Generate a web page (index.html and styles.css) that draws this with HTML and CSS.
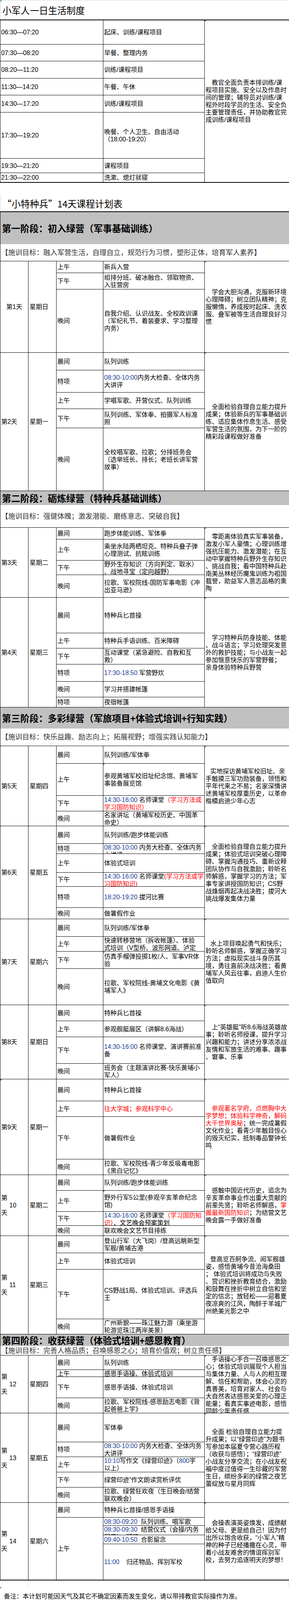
FILE: index.html
```html
<!DOCTYPE html>
<html lang="zh-CN">
<head>
<meta charset="utf-8">
<title>小军人一日生活制度</title>
<link rel="stylesheet" href="styles.css">
</head>
<body>
<div class="sheet">
  <div class="title1 tri">小军人一日生活制度</div>

  <div class="routine">
    <div class="c"><p>06:30—07:20</p></div><div class="c"><p>起床、训练/课程项目</p></div>
    <div class="c"><p>07:30—08:20</p></div><div class="c"><p>早餐、整理内务</p></div>
    <div class="c"><p>08:20—11:20</p></div><div class="c"><p>训练/课程项目</p></div>
    <div class="c"><p>11:30—14:20</p></div><div class="c"><p>午餐、午休</p></div>
    <div class="c"><p>14:30—17:20</p></div><div class="c"><p>训练/课程项目</p></div>
    <div class="c"><p>17:30—19:20</p></div><div class="c"><p>晚餐、个人卫生、自由活动<br>（18:00-19:20）</p></div>
    <div class="c"><p>19:30—21:20</p></div><div class="c"><p>课程项目</p></div>
    <div class="c"><p>21:30—22:00</p></div><div class="c"><p>洗漱、熄灯就寝</p></div>
    <div class="c rnote tri"><p>教官全面负责本排训练/课<br>程项目实施、安全以及作息时<br>间的管理；辅导员对训练/课<br>程外时段学员的生活、安全负<br>主要管理责任，并协助教官完<br>成训练/课程项目</p></div>
  </div>

  <div class="title2">“小特种兵”14天课程计划表</div>

  <div class="course">
    <div class="phase p1">第一阶段：初入绿营（军事基础训练）</div>
    <div class="goal g1">【施训目标：融入军营生活，自理自立，规范行为习惯，塑形正体，培育军人素养】</div>

    <div class="day d1">
      <div class="c dc mid"><p>第1天</p></div>
      <div class="c wk"><p>星期日</p></div>
      <div class="c pd"><p>上午</p></div><div class="c ac"><p>新兵入营</p></div>
      <div class="c pd"><p>下午</p></div><div class="c ac"><p>组排分班、破冰融合、领取物资、<br>入驻营房</p></div>
      <div class="c pd"><p>晚间</p></div><div class="c ac"><p>自我介绍、认识战友、全校政训课<br>（军纪礼节、着装要求、学习整理<br>内务）</p></div>
      <div class="c nt tri"><p>学会大胆沟通，克服新环境<br>心理障碍；树立团队精神；克<br>服懒惰，养成按时起床、洗衣<br>服、叠军被等生活自理良好习<br>惯</p></div>
    </div>

    <div class="day d2">
      <div class="c dc"><p>第2天</p></div>
      <div class="c wk"><p>星期一</p></div>
      <div class="c pd"><p>晨间</p></div><div class="c ac"><p>队列训练</p></div>
      <div class="c pd"><p>特项</p></div><div class="c ac"><p><span class="blu">08:30-10:00</span>内务大检查、全体内务<br>大讲评</p></div>
      <div class="c pd"><p>上午</p></div><div class="c ac"><p>学唱军歌、开营仪式、队列训练</p></div>
      <div class="c pd"><p>下午</p></div><div class="c ac"><p>队列训练、军体拳、拍摄军人标准<br>照</p></div>
      <div class="c pd"><p>晚间</p></div><div class="c ac"><p>全校唱军歌、拉歌；分排班务会<br>（选举班长、排长；老班长讲军营<br>故事）</p></div>
      <div class="c nt tri"><p>全面检验自理自立能力提升<br>成果；体验新兵的军事基础训<br>练、适应集体作息生活、感受<br>军营生活的氛围，为下一阶的<br>精彩段课程做好准备</p></div>
    </div>

    <div class="phase p2">第二阶段：砺炼绿营（特种兵基础训练）</div>
    <div class="goal g2">【施训目标：强健体魄；激发潜能、磨练意志、突破自我】</div>

    <div class="day d3">
      <div class="c dc"><p>第3天</p></div>
      <div class="c wk"><p>星期二</p></div>
      <div class="c pd"><p>晨间</p></div><div class="c ac"><p>跑步体能训练、军体拳</p></div>
      <div class="c pd"><p>上午</p></div><div class="c ac"><p>乘坐水陆两栖坦克、特种兵叠子弹<br>心理测试、抗眩训练</p></div>
      <div class="c pd"><p>下午</p></div><div class="c ac"><p>野外生存知识（方向判定、取水）<br>、战地寻宝（定向越野）</p></div>
      <div class="c pd"><p>晚间</p></div><div class="c ac"><p>拉歌、军校院线-国防军事电影《冲<br>出亚马逊》</p></div>
      <div class="c nt tri"><p>零距离体验真实军事装备，<br>激发小军人豪情；心理训练增<br>强抗压能力、激发潜能；在互<br>动中掌握特种兵野外生存知识<br>、挑战自我；看中国特种兵赴<br>南美丛林经历魔鬼训练为祖国<br>载誉，助益军人意志品格的熏<br>陶</p></div>
    </div>

    <div class="day d4">
      <div class="c dc"><p>第4天</p></div>
      <div class="c wk"><p>星期三</p></div>
      <div class="c pd"><p>晨间</p></div><div class="c ac"><p>特种兵匕首操</p></div>
      <div class="c pd"><p>上午</p></div><div class="c ac"><p>特种兵手语训练、百米障碍</p></div>
      <div class="c pd"><p>下午</p></div><div class="c ac"><p>互动课堂（紧急避险、自救和互<br>救）</p></div>
      <div class="c pd"><p>特项</p></div><div class="c ac"><p><span class="blu">17:30-18:50</span> 军营野炊</p></div>
      <div class="c pd"><p>晚间</p></div><div class="c ac"><p>学习并搭建帐篷</p></div>
      <div class="c pd"><p>特项</p></div><div class="c ac"><p>夜宿帐篷</p></div>
      <div class="c nt tri"><p>学习特种兵防身技能、体能<br>、战斗语言；学习处理突发意<br>外的救护技能；与小战友一起<br>参加惬意快乐的军营野餐；<br>亲身体验特种兵野营</p></div>
    </div>

    <div class="phase p3">第三阶段：多彩绿营（军旅项目+体验式培训+行知实践）</div>
    <div class="goal g3">【施训目标：快乐益趣、励志向上；拓展视野；增强实践认知能力】</div>

    <div class="day d5">
      <div class="c dc"><p>第5天</p></div>
      <div class="c wk"><p>星期四</p></div>
      <div class="c pd"><p>晨间</p></div><div class="c ac"><p>队列训练/军体拳</p></div>
      <div class="c pd"><p>上午</p></div><div class="c ac tri"><p>参观黄埔军校旧址纪念馆、黄埔军<br>事装备展览馆</p></div>
      <div class="c pd"><p>下午</p></div><div class="c ac"><p><span class="blu">14:30-16:00</span> 名师课堂<span class="red">（学习方法或<br>学习国防知识）</span></p></div>
      <div class="c pd"><p>晚间</p></div><div class="c ac"><p>名家讲坛（黄埔军校历史、中国革<br>命史）</p></div>
      <div class="c nt ind-s tri"><p>实地探访黄埔军校旧址、亲<br>手触摸三军功勋装备，领悟和<br>平年代来之不易；名家深情讲<br>述黄埔军校厚重历史，以革命<br>楷模启迪少年心志</p></div>
    </div>

    <div class="day d6">
      <div class="c dc"><p>第6天</p></div>
      <div class="c wk"><p>星期五</p></div>
      <div class="c pd"><p>晨间</p></div><div class="c ac"><p>队列训练/跑步体能训练</p></div>
      <div class="c pd"><p>特项</p></div><div class="c ac"><p><span class="blu">08:30-10:00</span> 内务大检查、全体内务<br>大讲评</p></div>
      <div class="c pd"><p>上午</p></div><div class="c ac"><p>体验式培训</p></div>
      <div class="c pd"><p>下午</p></div><div class="c ac"><p><span class="blu">14:30-16:00</span> 名师课堂<span class="red">(学习方法或学<br>习国防知识)</span></p></div>
      <div class="c pd"><p>特项</p></div><div class="c ac"><p><span class="blu">18:20-19:20</span> 拔河比赛</p></div>
      <div class="c pd"><p>晚间</p></div><div class="c ac"><p>做暑假作业</p></div>
      <div class="c nt tri"><p>全面检验自理自立能力提升<br>成果；体验式培训突破心理障<br>碍、掌握沟通技巧、重新诠释<br>团队协作与自我激励；聆听名<br>师解惑，掌握学习的方法；军<br>事专家讲授国防知识；CS野<br>战烽烟再起决战决胜；拔河大<br>挑战爆发集体力量</p></div>
    </div>

    <div class="day d7">
      <div class="c dc"><p>第7天</p></div>
      <div class="c wk"><p>星期六</p></div>
      <div class="c pd"><p>晨间</p></div><div class="c ac"><p>队列训练/军体拳</p></div>
      <div class="c pd"><p>上午</p></div><div class="c ac"><p>快速转移营地（拆收帐篷）、体验<br>式培训（V型桥、波形网道、泸定<br>桥）</p></div>
      <div class="c pd"><p>下午</p></div><div class="c ac tri"><p>仿真手榴弹投掷1枚/人、军事VR体<br>验</p></div>
      <div class="c pd"><p>晚间</p></div><div class="c ac"><p>拉歌、军校院线-黄埔文化电影《黄<br>埔军人》</p></div>
      <div class="c nt ind-s tri"><p>水上项目唤起勇气和快乐；<br>聆听名师解惑，掌握正确学习<br>方法；虚拟现实战斗身历其<br>境，勇往直前决战决胜；看黄<br>埔军人风云往事，启迪人生价<br>值取向</p></div>
    </div>

    <div class="day d8">
      <div class="c dc"><p>第8天</p></div>
      <div class="c wk"><p>星期日</p></div>
      <div class="c pd"><p>晨间</p></div><div class="c ac"><p>特种兵匕首操</p></div>
      <div class="c pd"><p>上午</p></div><div class="c ac"><p>参观舰艇展区（讲解8.6海战）</p></div>
      <div class="c pd"><p>下午</p></div><div class="c ac"><p><span class="blu">14:30-16:00</span> 名师课堂、演讲赛前准<br>备</p></div>
      <div class="c pd"><p>晚间</p></div><div class="c ac"><p>班务会（主题演讲比赛-快乐黄埔小<br>军人）</p></div>
      <div class="c nt tri"><p>上“英雄艇”听8.6海战英雄故<br>事；聆听名师授课，提升学习<br>兴趣和能力；讲述分享浓浓战<br>友情和军旅生活的难事、趣事<br>、窘事、乐事</p></div>
    </div>

    <div class="day d9">
      <div class="c dc tri"><p>第9天</p></div>
      <div class="c wk"><p>星期一</p></div>
      <div class="c pd"><p>晨间</p></div><div class="c ac"><p>特种兵匕首操</p></div>
      <div class="c pd"><p>上午</p></div><div class="c ac"><p class="red">往大学城；参观科学中心</p></div>
      <div class="c pd"><p>下午</p></div><div class="c ac"><p>做暑假作业</p></div>
      <div class="c pd"><p>晚间</p></div><div class="c ac"><p>拉歌、军校院线-青少年反吸毒电影<br>《黑白记忆》</p></div>
      <div class="c nt tri"><p><span class="red">参观著名学府，点燃胸中大<br>学梦想；体验科学神奇，解码<br>大千世界奥秘</span>；统一完成暑假<br>文化作业；看青少年触目惊心<br>的毁灭纪实，抵制毒品警钟长<br>鸣</p></div>
    </div>

    <div class="day d10">
      <div class="c dc"><p>第<br><span class="dn">10</span><br>天</p></div>
      <div class="c wk"><p>星期二</p></div>
      <div class="c pd"><p>晨间</p></div><div class="c ac"><p>队列训练/跑步体能训练</p></div>
      <div class="c pd"><p>上午</p></div><div class="c ac tri"><p>野外行军5公里(参观辛亥革命纪念<br>馆)</p></div>
      <div class="c pd"><p>下午</p></div><div class="c ac"><p><span class="blu">14:30-16:00</span> 名师课堂<span class="red">（学习国防知<br>识）</span>、文艺晚会预案策划</p></div>
      <div class="c pd"><p>晚间</p></div><div class="c ac"><p>联欢晚会文艺节目排练</p></div>
      <div class="c nt tri"><p>感触中国近代历史，追念为<br>辛亥革命事业作出重大贡献的<br>前辈先贤；聆听名师解惑，<span class="red">掌<br>握最新国防知识</span>；为结营文艺<br>晚会露一手做好准备</p></div>
    </div>

    <div class="day d11">
      <div class="c dc"><p>第<br><span class="dn">11</span><br>天</p></div>
      <div class="c wk"><p>星期三</p></div>
      <div class="c pd"><p>晨间</p></div><div class="c ac"><p>登山行军（大飞岗）/登高远眺新型<br>军舰/黄埔古港</p></div>
      <div class="c pd"><p>上午</p></div><div class="c ac"><p>体验式培训</p></div>
      <div class="c pd"><p>下午</p></div><div class="c ac"><p>CS野战1局、体验式培训、评选兵<br>王</p></div>
      <div class="c pd"><p>晚间</p></div><div class="c ac"><p>广州新貌——珠江魅力游（乘坐游<br>轮游览珠江两岸美景）</p></div>
      <div class="c nt ind-s tri"><p>登高览百舸争流、阅军舰雄<br>姿，感悟黄埔今昔沧海桑田<br>；&nbsp;体验式培训将成功与失败<br>、赏识和挫折教育结合，激励<br>和鼓舞在挫折中树立自信和坚<br>定的信念；放轻松——迎着夏<br>夜凉爽的江风，陶醉于羊城广<br>州绝美光影之中</p></div>
    </div>

    <div class="phase p4">第四阶段：收获绿营（体验式培训+感恩教育）</div>
    <div class="goal g4">【施训目标：完善人格品质；召唤感恩之心；培育价值观；树立责任感】</div>

    <div class="day d12">
      <div class="c dc"><p>第<br><span class="dn">12</span><br>天</p></div>
      <div class="c wk"><p>星期四</p></div>
      <div class="c pd"><p>晨间</p></div><div class="c ac"><p>队列训练</p></div>
      <div class="c pd"><p>上午</p></div><div class="c ac"><p>感恩手语操、体验式培训</p></div>
      <div class="c pd"><p>下午</p></div><div class="c ac"><p>感恩手语操、体验式培训</p></div>
      <div class="c pd"><p>晚间</p></div><div class="c ac"><p>拉歌、军校院线-感恩励志电影《背<br>起爸爸上学》</p></div>
      <div class="c nt tri"><p>手语操心手合一召唤感恩之<br>心；体验式培训展现个人担当<br>与集体力量、人与人的相互理<br>解、信任和帮助，体会心灵的<br>真善美，培育对家人、社会与<br>大自然表达感恩关爱的心理正<br>能量；看真实事迹电影，感悟<br>同龄少年责任感</p></div>
    </div>

    <div class="day d13">
      <div class="c dc"><p>第<br><span class="dn">13</span><br>天</p></div>
      <div class="c wk"><p>星期五</p></div>
      <div class="c pd"><p>晨间</p></div><div class="c ac"><p>军体拳</p></div>
      <div class="c pd"><p>特项</p></div><div class="c ac"><p><span class="blu">08:30-10:00</span> 内务大检查、全体内务<br>大讲评</p></div>
      <div class="c pd"><p>上午</p></div><div class="c ac"><p><span class="blu">10:10</span>写作文《绿营印迹》（<span class="blu">800</span>字<br>以上）</p></div>
      <div class="c pd"><p>下午</p></div><div class="c ac"><p>绿营印迹”作文朗读赏析评优</p></div>
      <div class="c pd"><p>晚间</p></div><div class="c ac"><p>拉歌、绿营狂欢夜（生日晚会/结营<br>联欢晚会）</p></div>
      <div class="c nt tri"><p>全面 检验自理自立能力提<br>升成果；以“绿营印迹”为题书<br>写参加本届夏令营心路历程<br>（收获与感悟）；“绿营印迹”<br>小战友分享交流；在小战友祝<br>福中度过值得一生珍藏的军营<br>生日，缤纷多彩的绿营之夜艺<br>蕾绽放与星月同辉</p></div>
    </div>

    <div class="day d14">
      <div class="c dc"><p>第<br><span class="dn">14</span><br>天</p></div>
      <div class="c wk"><p>星期六</p></div>
      <div class="c pd"><p>晨间</p></div><div class="c ac"><p>特种兵匕首操/感恩手语操</p></div>
      <div class="c pd span4"><p>上午</p></div>
      <div class="c ac"><p><span class="blu">08:30-09:20</span>&nbsp;&nbsp;队列训练、唱军歌</p></div>
      <div class="c ac"><p><span class="blu">08:30-09:30</span>&nbsp;&nbsp;结营仪式（会操/内务<br>展示）、颁奖</p></div>
      <div class="c ac"><p><span class="blu">09:40-10:50</span>&nbsp;&nbsp;合影留念</p></div>
      <div class="c ac"><p><span class="blu">11:00</span>&nbsp;&nbsp;&nbsp;&nbsp;归还物品、挥别军校</p></div>
      <div class="c nt tri"><p>会操表演英姿焕发，成绩献<br>给父母、更是给自己！因为付<br>出所以饱含收获，“小军人”精<br>神的种子已经播撒在心灵，带<br>着小战友难舍的情谊挥别军<br>校，去努力追逐明天的梦想！</p></div>
    </div>
  </div>

  <div class="blank"></div>
  <div class="remark tri">备注：本计划可能因天气及其它不确定因素而发生变化，请以带排教官实际操作为准。</div>
  <div class="tail"></div>
</div>
</body>
</html>
```

FILE: styles.css
```css
* {
  box-sizing: border-box;
  margin: 0;
  padding: 0;
}

html,
body {
  background: #fff;
}

body {
  margin: 0;
  width: 741px;
  font-family: "Liberation Sans", "Noto Sans CJK SC", sans-serif;
  font-size: 16px;
  line-height: 19px;
  color: #000;
}

.sheet {
  width: 741px;
}

/* little green error markers in cell corners */
.tri {
  position: relative;
}

.tri::before {
  content: "";
  position: absolute;
  left: 0;
  top: 0;
  width: 0;
  height: 0;
  border-top: 4px solid #1e9a28;
  border-right: 4px solid transparent;
}

/* titles */
.title1 {
  height: 50px;
  border-top: 1px solid #d4d4d4;
  border-left: 1px solid #d4d4d4;
  display: flex;
  align-items: center;
  padding: 4px 0 0 5px;
  font-size: 23.5px;
  line-height: 28px;
}

.title2 {
  margin-top: 29px;
  height: 44px;
  border-left: 1px solid #d4d4d4;
  display: flex;
  align-items: center;
  padding: 4px 0 0 5px;
  font-family: "Noto Sans CJK SC", sans-serif;
  font-size: 23.5px;
  line-height: 28px;
}

/* generic cell: one text block, vertically centred, clipped */
.c {
  border-right: 1px solid #000;
  border-bottom: 1px solid #000;
  display: flex;
  flex-direction: column;
  justify-content: center;
  justify-content: safe center;
  overflow: hidden;
  white-space: nowrap;
  padding: 0 2px;
  min-height: 0;
}

.c > p {
  flex: none;
}

/* daily routine table */
.routine {
  display: grid;
  grid-template-columns: 264px 260px 216px;
  grid-template-rows: 62px 43px 44px 43px 44px 118px 37px 24px;
  border-top: 2px solid #000;
  border-left: 1px solid #000;
  border-bottom: 1px solid #000;
}

.routine .rnote {
  grid-column: 3;
  grid-row: 1 / -1;
  border-right: none;
  text-indent: 1em;
}

/* course plan */
.course {
  border-top: 2px solid #000;
  border-left: 1px solid #000;
  border-bottom: 1px solid #000;
}

.phase {
  background: #c0c0c0;
  display: flex;
  align-items: center;
  padding: 3px 0 0 4px;
  font-size: 23.5px;
  line-height: 28px;
  font-weight: bold;
  white-space: nowrap;
  overflow: hidden;
}

.p1 { height: 82px; }
.p2 { height: 36px; }
.p3 { height: 54px; }
.p4 { height: 30px; }

.goal {
  display: flex;
  align-items: center;
  padding-left: 2px;
  font-size: 18px;
  line-height: 22px;
  color: #333;
  border-bottom: 1px solid #000;
  white-space: nowrap;
  overflow: hidden;
}

.g1 { height: 44px; }
.g2 { height: 58px; }
.g3 { height: 45px; }
.g4 { height: 24px; }

.day {
  display: grid;
  grid-template-columns: 72px 72px 120px 260px 216px;
}

.d1 { grid-template-rows: 30px 42px 162px; }
.d2 { grid-template-rows: 45px 57px 42px 49px 161px; }
.d3 { grid-template-rows: 30px 54px 37px 58px; }
.d4 { grid-template-rows: 91px 39px 41px 44px 40px 26px; }
.d5 { grid-template-rows: 45px 82px 40px 38px; }
.d6 { grid-template-rows: 45px 26px 48px 36px 54px 29px; }
.d7 { grid-template-rows: 45px 38px 44px 93px; }
.d8 { grid-template-rows: 41px 41px 68px 40px; }
.d9 { grid-template-rows: 56px 40px 109px 40px; }
.d10 { grid-template-rows: 40px 54px 36px 26px; }
.d11 { grid-template-rows: 44px 42px 127px 39px; }
.d12 { grid-template-rows: 37px 18px 54px 39px; }
.d13 { grid-template-rows: 74px 38px 39px 39px 39px; }
.d14 { grid-template-rows: 38px 21px 24px 23px 92px; }

.dc {
  grid-column: 1;
  grid-row: 1 / -1;
}

.dc.mid {
  align-items: center;
}

.dn {
  padding-left: 21px;
}

.wk {
  grid-column: 2;
  grid-row: 1 / -1;
  padding-left: 3px;
}

.pd {
  grid-column: 3;
}

.pd.span4 {
  grid-row: span 4;
}

.ac {
  grid-column: 4;
}

.nt {
  grid-column: 5;
  grid-row: 1 / -1;
  border-right: none;
  text-indent: 1em;
}

.nt.ind-s {
  text-indent: 12px;
}

.red {
  color: #ff0000;
}

.blu {
  color: #1c3f94;
}

/* bottom area */
.blank {
  height: 17px;
  margin-left: 72px;
  width: 669px;
  border-left: 1px solid #dadada;
  border-right: 1px solid #dadada;
}

.remark {
  height: 42px;
  display: flex;
  align-items: center;
  padding: 4px 0 0 10px;
  white-space: nowrap;
}

.tail {
  height: 41px;
  border-left: 1px solid #dadada;
  border-bottom: 1px solid #dadada;
}
```
